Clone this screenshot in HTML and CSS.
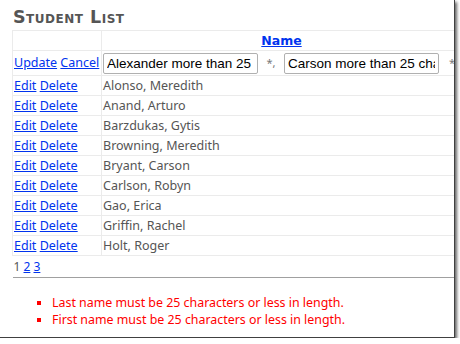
FILE: index.html
```html
<!DOCTYPE html>
<html>
<head>
    <title>Student List</title>
    <link rel="stylesheet" href="styles.css">
</head>
<body>
    <div class="frame">
        <h2 class="title">Student List</h2>
        <table class="grid">
            <tr class="head">
                <th class="cmd"></th>
                <th class="name"><a href="#">Name</a></th>
            </tr>
            <tr class="edit-row">
                <td class="cmd"><a href="#">Update</a> <a href="#">Cancel</a></td>
                <td class="name">
                    <div class="edit-fields">
                        <input type="text" value="Alexander more than 25 characters">
                        <span class="star">*,</span>
                        <input type="text" value="Carson more than 25 characters">
                        <span class="star">*</span>
                    </div>
                </td>
            </tr>
            <tr><td class="cmd"><a href="#">Edit</a> <a href="#">Delete</a></td><td class="name">Alonso, Meredith</td></tr>
            <tr><td class="cmd"><a href="#">Edit</a> <a href="#">Delete</a></td><td class="name">Anand, Arturo</td></tr>
            <tr><td class="cmd"><a href="#">Edit</a> <a href="#">Delete</a></td><td class="name">Barzdukas, Gytis</td></tr>
            <tr><td class="cmd"><a href="#">Edit</a> <a href="#">Delete</a></td><td class="name">Browning, Meredith</td></tr>
            <tr><td class="cmd"><a href="#">Edit</a> <a href="#">Delete</a></td><td class="name">Bryant, Carson</td></tr>
            <tr><td class="cmd"><a href="#">Edit</a> <a href="#">Delete</a></td><td class="name">Carlson, Robyn</td></tr>
            <tr><td class="cmd"><a href="#">Edit</a> <a href="#">Delete</a></td><td class="name">Gao, Erica</td></tr>
            <tr><td class="cmd"><a href="#">Edit</a> <a href="#">Delete</a></td><td class="name">Griffin, Rachel</td></tr>
            <tr><td class="cmd"><a href="#">Edit</a> <a href="#">Delete</a></td><td class="name">Holt, Roger</td></tr>
            <tr class="pager">
                <td colspan="2"><span>1</span> <a href="#">2</a> <a href="#">3</a></td>
            </tr>
        </table>
        <ul class="errors">
            <li>Last name must be 25 characters or less in length.</li>
            <li>First name must be 25 characters or less in length.</li>
        </ul>
    </div>
</body>
</html>
```

FILE: styles.css
```css
body {
    margin: 0;
    background: #ffffff;
    font-family: "Noto Sans", "Open Sans", sans-serif;
    font-size: 12.5px;
    color: #555555;
}
.frame {
    width: 454px;
    height: 337px;
    background: #ffffff;
    border-right: 1px solid #404040;
    border-bottom: 1px solid #404040;
    box-shadow: 2px 2px 3px #666666;
    overflow: hidden;
}
.title {
    margin: 0;
    padding: 7px 0 0 13px;
    height: 23px;
    font-family: "DejaVu Sans", sans-serif;
    font-variant: small-caps;
    font-size: 17.5px;
    font-weight: bold;
    letter-spacing: 0.5px;
    color: #555555;
    line-height: 20px;
}
.grid {
    margin-left: 12px;
    width: 443px;
    border-collapse: collapse;
    table-layout: fixed;
}
.grid td, .grid th {
    border: 1px solid #ebebeb;
    padding: 0 1px;
    height: 19px;
    line-height: 18px;
    white-space: nowrap;
    overflow: hidden;
}
.grid a {
    color: #0033ee;
}
.cmd {
    width: 86px;
    font-size: 12.5px;
}
.head th {
    font-family: "DejaVu Sans", sans-serif;
    font-size: 12.5px;
    font-weight: bold;
}
.head .name {
    padding-left: 8px;
}
.edit-row td {
    height: 24px;
}
.edit-fields {
    display: flex;
    align-items: center;
}
.edit-fields input {
    flex: none;
    width: 155px;
    height: 21px;
    box-sizing: border-box;
    padding: 0 3px;
    border: 1px solid #b0b0b0;
    border-radius: 2px;
    font-family: "Liberation Sans", Arial, sans-serif;
    font-size: 13.5px;
    color: #000000;
}
.star {
    flex: none;
    width: 26px;
    text-align: center;
    font-size: 11px;
    color: #777777;
}
.pager td {
    height: 21px;
    border-left: none;
    border-right: none;
    border-bottom: 1px solid #a0a0a0;
    font-size: 12px;
}
.errors {
    margin: 16px 0 0 0;
    padding-left: 52px;
    list-style: square;
    font-size: 12.4px;
    color: #ff0000;
    line-height: 17px;
}
```
